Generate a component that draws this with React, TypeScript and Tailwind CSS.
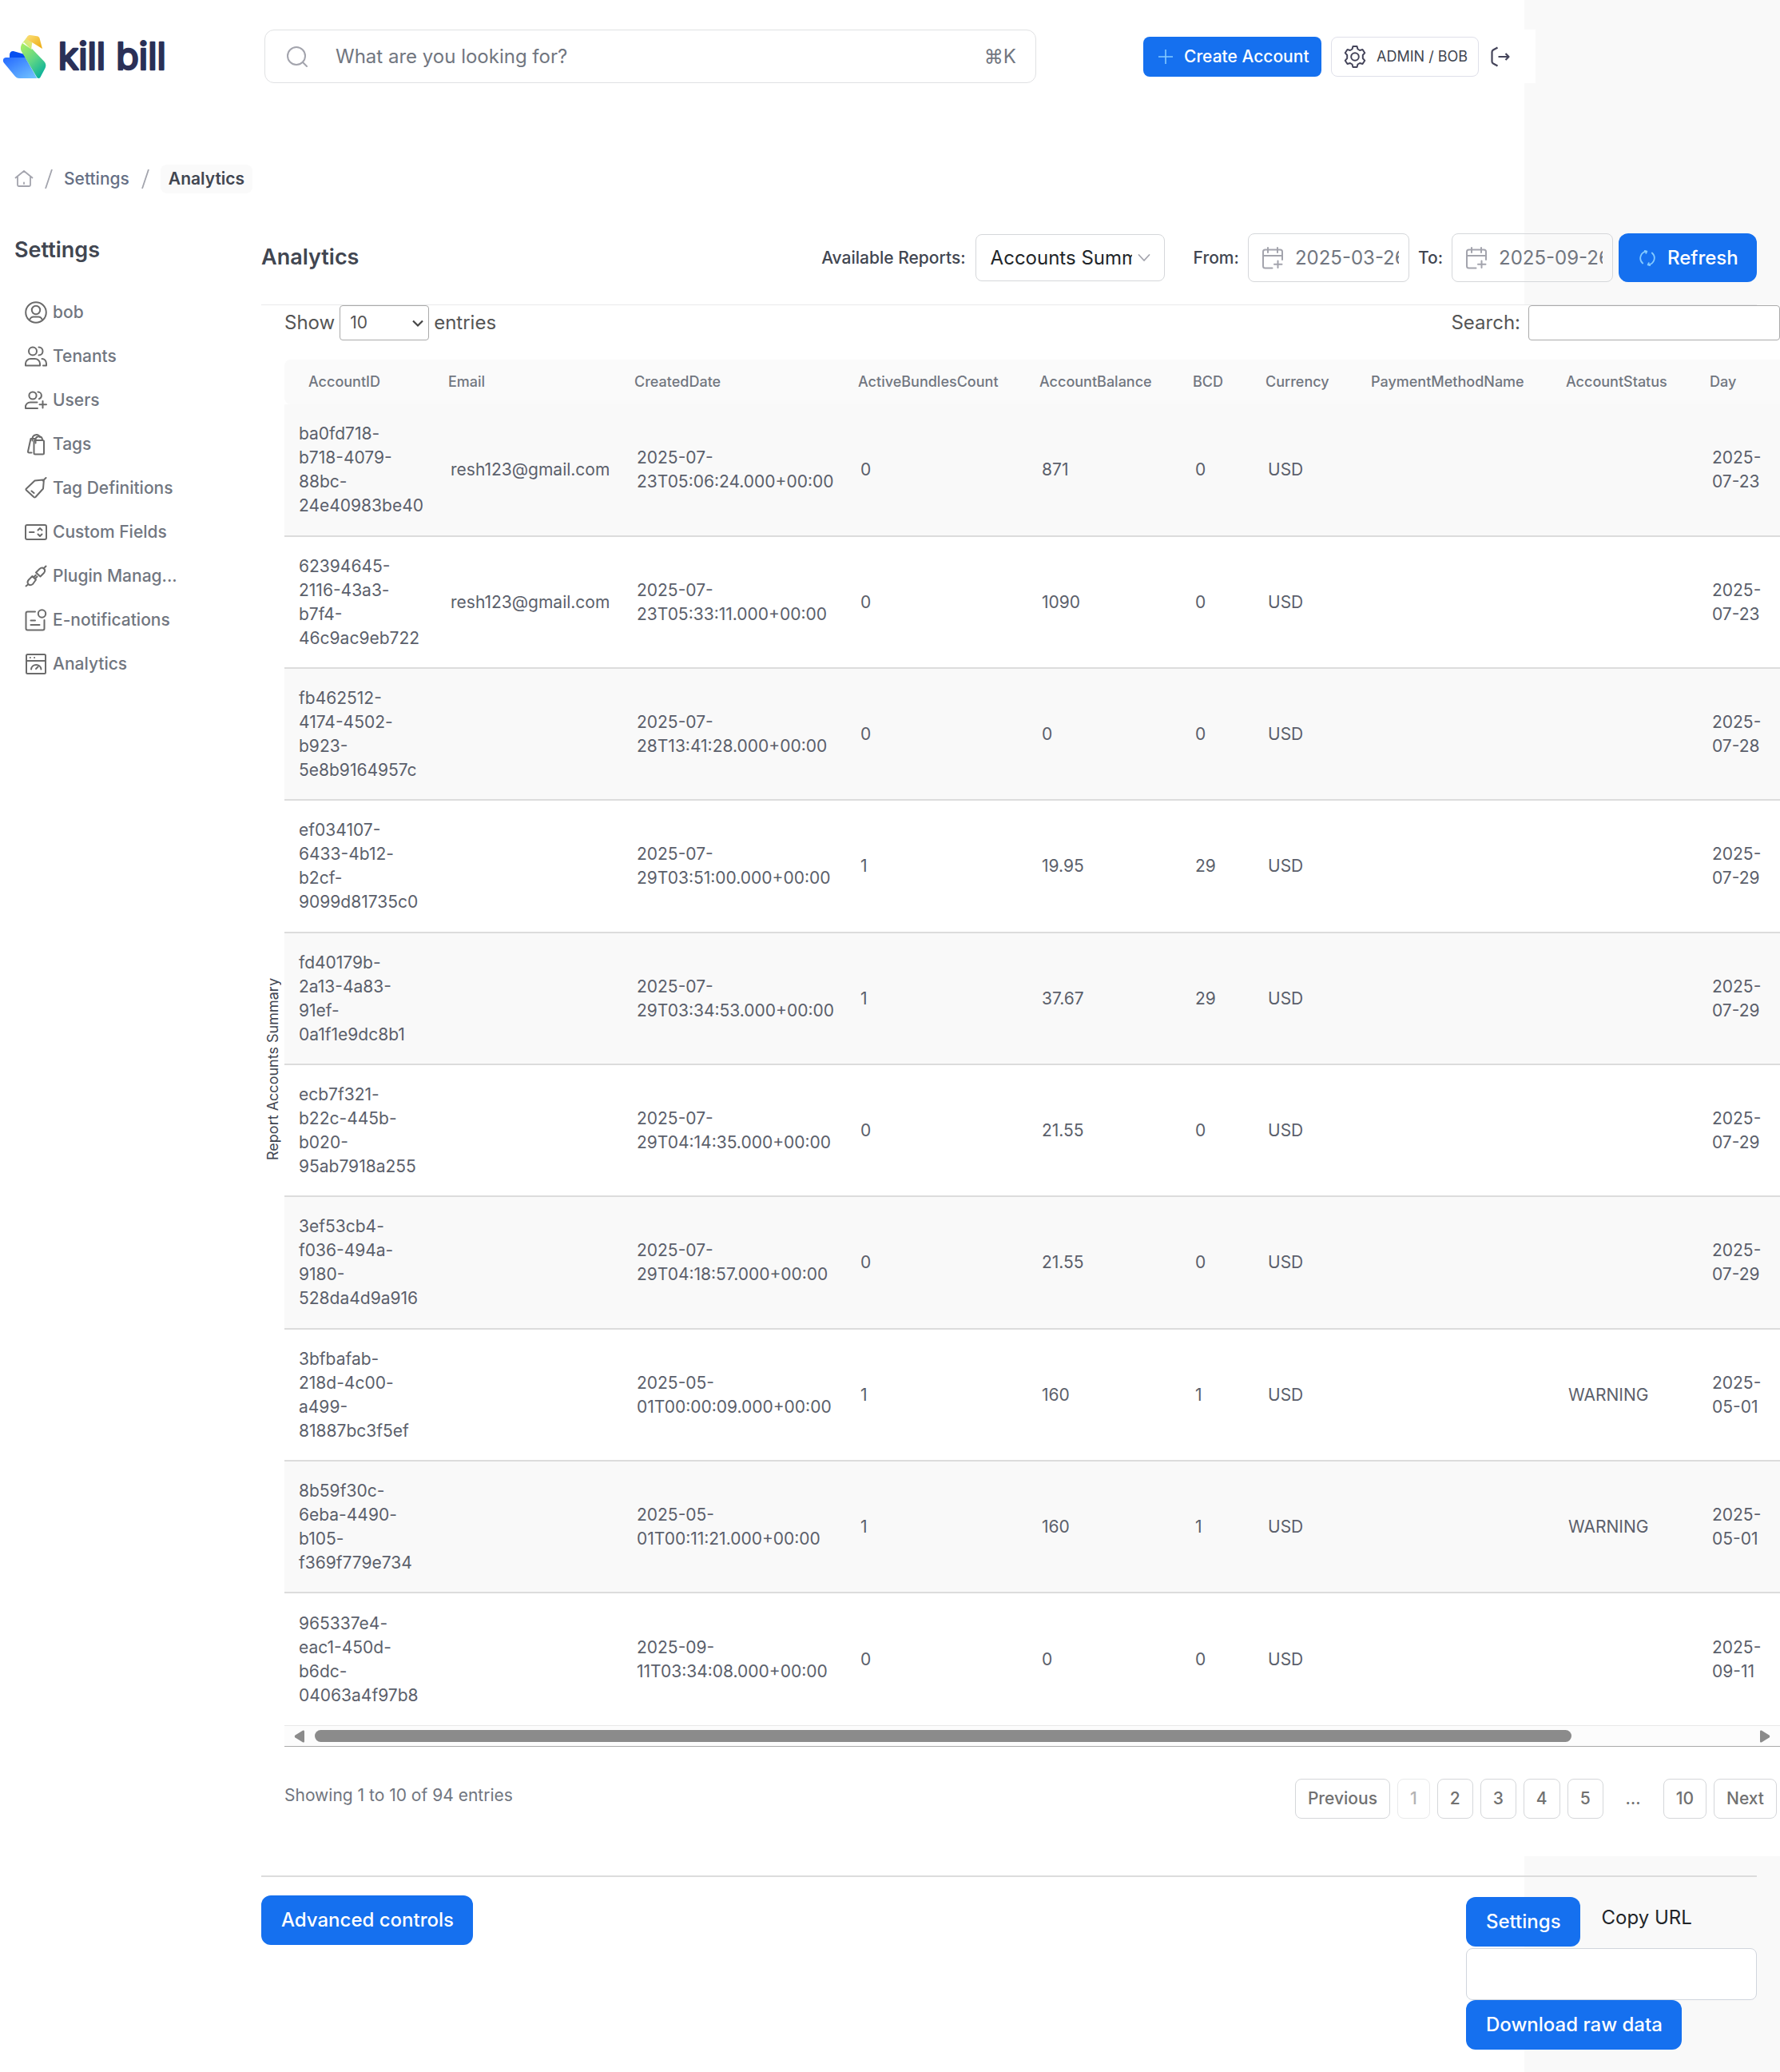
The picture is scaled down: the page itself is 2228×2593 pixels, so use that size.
import React from "react";

type IconProps = { children: React.ReactNode };

function SideIcon({ children }: IconProps) {
  return (
    <svg
      className="h-7 w-7 shrink-0"
      viewBox="0 0 28 28"
      fill="none"
      stroke="#6b6b6b"
      strokeWidth="2"
      strokeLinecap="round"
      strokeLinejoin="round"
      aria-hidden="true"
    >
      {children}
    </svg>
  );
}

const sideItems: { label: string; icon: React.ReactNode }[] = [
  {
    label: "bob",
    icon: (
      <>
        <circle cx="14" cy="14" r="12.8" />
        <circle cx="14" cy="11" r="5.2" />
        <path d="M6 23.5c1-3 3-4 5-4h6c2 0 4 1 5 4" />
      </>
    ),
  },
  {
    label: "Tenants",
    icon: (
      <>
        <circle cx="10" cy="7.5" r="5" />
        <path d="M17.5 2.6c3 0 5 2.2 5 4.9s-2 4.9-5 4.9" />
        <path d="M1 25.5v-2.5c0-3.5 3-6 6.500-6h5c3.500 0 6.500 2.500 6.500 6v2.500z" />
        <path d="M21.5 17c3 0 5.500 2.500 5.500 6v2.500h-4" />
      </>
    ),
  },
  {
    label: "Users",
    icon: (
      <>
        <circle cx="10" cy="8" r="4.6" />
        <path d="M16.5 3.6c2.500 0 4.400 2 4.400 4.400 0 1.800-1.200 3.500-3 4.200" />
        <path d="M15.5 16.5H7c-3.500 0-6 2.500-6 5.500v2h15" />
        <path d="M22.5 15v8.500M18.5 19.2h8.500" />
      </>
    ),
  },
  {
    label: "Tags",
    icon: (
      <>
        <rect x="11.5" y="9" width="12.5" height="17.5" rx="1.5" />
        <path d="M13.5 12.5V8a4.300 4.300 0 0 1 8.500 0" />
        <path d="M9.5 9.5V6.500a5 5 0 0 1 9.500-1.500M13 7H7.500l-3.500 16c0 1 .5 1.500 1.500 1.500h3" />
      </>
    ),
  },
  {
    label: "Tag Definitions",
    icon: (
      <>
        <path d="M12.5 4.5l10-1 1.300 1.300-.8 9.700L13.500 25c-.7.6-1.500.6-2.200 0L2 16.500c-.6-.6-.6-1.400 0-2z" />
        <path d="M22.8 4.5L26.500 1M8.500 17.500l3 2.500" />
      </>
    ),
  },
  {
    label: "Custom Fields",
    icon: (
      <>
        <rect x="1" y="5" width="26" height="18" rx="2" />
        <path d="M6 14h5.500M16.500 11.500l2.500-2.500 2.500 2.500M16.500 16.500l2.500 2.500 2.500-2.500" />
      </>
    ),
  },
  {
    label: "Plugin Manag...",
    icon: (
      <>
        <path d="M23.500 4.500L26.500 1.500" />
        <path d="M14 9.500l4.500-4.500c2-1.800 4-1.800 5.500-.500 1.500 1.500 1.500 3.500 0 5.500l-4.500 4.500z" />
        <path d="M14 18.500L9.500 14l-4.500 4.500c-1.800 2-1.800 4-.500 5.500 1.500 1.500 3.500 1.500 5.500 0zM4 24.500L1.500 26.500" />
        <path d="M11 15.500l2.800-2.800M12.800 17.300l2.800-2.800" />
      </>
    ),
  },
  {
    label: "E-notifications",
    icon: (
      <>
        <path d="M13 3.500H3.500c-1 0-2 .7-2 2v19c0 1 .8 2 2 2h19c1.200 0 2-1 2-2V14" />
        <circle cx="21.5" cy="6" r="4.7" />
        <path d="M7.5 14.500h5.500M7.500 20h11" />
      </>
    ),
  },
  {
    label: "Analytics",
    icon: (
      <>
        <rect x="2" y="2" width="24" height="24" rx="1.5" />
        <path d="M2 10h24M6.800 6h.1M12 6h.1M8 20.500a6.300 6.300 0 0 1 12.500 0M14 20l2.500-2.500" />
      </>
    ),
  },
];

const columns = [
  { label: "AccountID", width: "w-[190px]" },
  { label: "Email", width: "w-[233px]" },
  { label: "CreatedDate", width: "w-[280px]" },
  { label: "ActiveBundlesCount", width: "w-[227px]" },
  { label: "AccountBalance", width: "w-[192px]" },
  { label: "BCD", width: "w-[91px]" },
  { label: "Currency", width: "w-[132px]" },
  { label: "PaymentMethodName", width: "w-[244px]" },
  { label: "AccountStatus", width: "w-[180px]" },
  { label: "Day", width: "" },
];

const rows: string[][] = [
  ["ba0fd718-b718-4079-88bc-24e40983be40", "resh123@gmail.com", "2025-07-23T05:06:24.000+00:00", "0", "871", "0", "USD", "", "", "2025-07-23"],
  ["62394645-2116-43a3-b7f4-46c9ac9eb722", "resh123@gmail.com", "2025-07-23T05:33:11.000+00:00", "0", "1090", "0", "USD", "", "", "2025-07-23"],
  ["fb462512-4174-4502-b923-5e8b9164957c", "", "2025-07-28T13:41:28.000+00:00", "0", "0", "0", "USD", "", "", "2025-07-28"],
  ["ef034107-6433-4b12-b2cf-9099d81735c0", "", "2025-07-29T03:51:00.000+00:00", "1", "19.95", "29", "USD", "", "", "2025-07-29"],
  ["fd40179b-2a13-4a83-91ef-0a1f1e9dc8b1", "", "2025-07-29T03:34:53.000+00:00", "1", "37.67", "29", "USD", "", "", "2025-07-29"],
  ["ecb7f321-b22c-445b-b020-95ab7918a255", "", "2025-07-29T04:14:35.000+00:00", "0", "21.55", "0", "USD", "", "", "2025-07-29"],
  ["3ef53cb4-f036-494a-9180-528da4d9a916", "", "2025-07-29T04:18:57.000+00:00", "0", "21.55", "0", "USD", "", "", "2025-07-29"],
  ["3bfbafab-218d-4c00-a499-81887bc3f5ef", "", "2025-05-01T00:00:09.000+00:00", "1", "160", "1", "USD", "", "WARNING", "2025-05-01"],
  ["8b59f30c-6eba-4490-b105-f369f779e734", "", "2025-05-01T00:11:21.000+00:00", "1", "160", "1", "USD", "", "WARNING", "2025-05-01"],
  ["965337e4-eac1-450d-b6dc-04063a4f97b8", "", "2025-09-11T03:34:08.000+00:00", "0", "0", "0", "USD", "", "", "2025-09-11"],
];

function Logo() {
  return (
    <a href="#" aria-label="kill bill" className="flex w-[331px] shrink-0">
      <svg className="h-[67px] w-[220px]" viewBox="0 21 660 201" aria-hidden="true">
        <defs>
          <linearGradient id="wing" x1="0" y1="0" x2="1" y2="1">
            <stop offset="0" stopColor="#2468ff" />
            <stop offset="1" stopColor="#74c6ff" />
          </linearGradient>
          <linearGradient id="body" x1="0.1" y1="0" x2="0.8" y2="1">
            <stop offset="0" stopColor="#a8ee63" />
            <stop offset="0.5" stopColor="#5fd685" />
            <stop offset="1" stopColor="#06ae9c" />
          </linearGradient>
          <linearGradient id="beak" x1="0" y1="0" x2="1" y2="1">
            <stop offset="0" stopColor="#fbe07a" />
            <stop offset="1" stopColor="#eda90c" />
          </linearGradient>
          <linearGradient id="neck" x1="0" y1="1" x2="0.6" y2="0">
            <stop offset="0" stopColor="#aef06a" />
            <stop offset="1" stopColor="#f3e27a" />
          </linearGradient>
        </defs>
        <path d="M36 128v-12c0-10 8-16 17-13l42 12v16z" fill="#064ff0" />
        <path d="M12 134c1-5 5-8 11-8h72l44 78H72c-7 0-12-3-16-8L15 146c-3-4-4-8-3-12z" fill="url(#wing)" />
        <path d="M84 72l36 24-2-5 48 50c6 7 8 15 4 24l-19 36c-3 4-9 4-12 0L80 102c-4-10-3-20 4-30z" fill="url(#body)" />
        <path d="M82 75l22-29 17 24-4 26-27-27z" fill="url(#neck)" />
        <path d="M104 46c3-4 6-5 11-4l24 4c5 1 9 4 10 9l10 38-40-25-21-12z" fill="url(#beak)" />
        <text
          x="218"
          y="172"
          fontFamily="Inter, sans-serif"
          fontSize="140"
          fontWeight="400"
          fill="#2a3057"
          stroke="#2a3057"
          strokeWidth="8"
          strokeLinejoin="round"
        >
          kill bill
        </text>
      </svg>
    </a>
  );
}

function CalendarIcon() {
  return (
    <svg className="h-7 w-7 shrink-0" viewBox="0 0 28 28" fill="none" stroke="#a3a4ad" strokeWidth="2" strokeLinecap="round" strokeLinejoin="round" aria-hidden="true">
      <path d="M13.500 26.500H4.500c-1.500 0-2.500-1-2.500-2.500V6c0-1.500 1-2.500 2.500-2.500h19c1.500 0 2.500 1 2.500 2.500v10M2 11h24M8 1v6M20 1v6M20.500 17.500v8.500M16 21.800h9.500" />
    </svg>
  );
}

function DateField({ id, label, value }: { id: string; label: string; value: string }) {
  return (
    <>
      <label htmlFor={id} className="text-[21px] font-medium text-[#414651]">{label}</label>
      <div className="ml-[11px] flex h-[61px] w-[202px] items-center rounded-lg border border-[#d5d7da] pl-4 pr-3">
        <CalendarIcon />
        <input id={id} defaultValue={value} className="ml-[14px] min-w-0 flex-1 bg-transparent text-2xl text-[#717680] outline-none" />
      </div>
    </>
  );
}

function Header() {
  return (
    <header className="mt-[37px] -mr-[14px] flex h-[67px] items-center bg-white">
      <Logo />
      <div className="flex h-[67px] flex-1 items-center rounded-xl border border-[#e0e1e3] px-6">
        <svg className="h-8 w-8 shrink-0" viewBox="0 0 32 32" fill="none" stroke="#a3a4ad" strokeWidth="2" strokeLinecap="round" aria-hidden="true">
          <circle cx="15" cy="15" r="11" />
          <path d="M23 23l5 5" />
        </svg>
        <input aria-label="Search" placeholder="What are you looking for?" className="ml-8 min-w-0 flex-1 bg-transparent text-2xl text-[#717680] outline-none placeholder:text-[#717680]" />
        <span className="text-2xl text-[#717680]">⌘K</span>
      </div>
      <button className="ml-[134px] flex h-[50px] w-[223px] items-center rounded-lg bg-[#1570ef] pl-[19px] text-[21px] font-medium whitespace-nowrap text-white">
        <svg className="mr-[14px] h-[18px] w-[18px] shrink-0" viewBox="0 0 18 18" stroke="#84caff" strokeWidth="1.6" aria-hidden="true">
          <path d="M9 0v18M0 9h18" />
        </svg>
        Create Account
      </button>
      <button className="ml-3 flex h-[50px] w-[185px] items-center rounded-lg border border-[#dfe0ea] pl-[15px] text-lg text-[#414651]">
        <svg className="mr-[13px] h-7 w-7 shrink-0" viewBox="0 0 28 28" fill="none" stroke="#44445a" strokeWidth="2" strokeLinejoin="round" aria-hidden="true">
          <circle cx="14" cy="14" r="4.8" />
          <path d="M11.500 1h5l1 3.500 2.500 1.500 3.500-1 2.800 4.200-2.500 2.800v4l2.500 2.800-2.800 4.200-3.500-1-2.500 1.500-1 3.500h-5l-1-3.500L8 22l-3.500 1-2.800-4.200L4.200 16v-4L1.700 9.200 4.500 5 8 6l2.500-1.500z" />
        </svg>
        ADMIN / BOB
      </button>
      <button aria-label="Log out" className="ml-[14px] mr-[31px]">
        <svg className="h-[26px] w-[26px]" viewBox="0 0 26 26" fill="none" stroke="#44445a" strokeWidth="2.2" strokeLinejoin="round" aria-hidden="true">
          <path d="M9.500 1.500L4 4.500c-1 .6-1.500 1.500-1.500 2.500v12c0 1 .5 2 1.500 2.500l5.500 3M10.500 13h13M19.500 9l4 4-4 4" />
        </svg>
      </button>
    </header>
  );
}

function Breadcrumb() {
  return (
    <nav aria-label="Breadcrumb" className="mt-[102px] flex h-9 items-center pl-[18px] text-[21px] leading-7">
      <a href="#" aria-label="Home">
        <svg className="h-6 w-6" viewBox="0 0 24 24" fill="none" stroke="#a3a4ad" strokeWidth="1.8" strokeLinecap="round" strokeLinejoin="round" aria-hidden="true">
          <path d="M1.500 10.500L12 2l10.500 8.500M4 9v10.500c0 1 .6 1.500 1.500 1.500h13c1 0 1.500-.6 1.500-1.500V9M12 16.500v1.500" />
        </svg>
      </a>
      <svg className="ml-[14px] h-6 w-2.5" viewBox="0 0 10 24" stroke="#a3a4ad" strokeWidth="1.8" aria-hidden="true"><path d="M1 24L9 0" /></svg>
      <a href="#" className="ml-[14px] font-medium text-[#667085]">Settings</a>
      <svg className="ml-[15px] h-6 w-2.5" viewBox="0 0 10 24" stroke="#a3a4ad" strokeWidth="1.8" aria-hidden="true"><path d="M1 24L9 0" /></svg>
      <a href="#" aria-current="page" className="ml-[14px] rounded-lg bg-[#fafafa] px-2.5 py-1 font-semibold text-[#414651]">Analytics</a>
    </nav>
  );
}

function Sidebar() {
  return (
    <aside className="w-[327px] shrink-0 pt-[5px]">
      <h2 className="pl-[18px] text-[27px] leading-8 font-semibold text-[#414651]">Settings</h2>
      <ul className="mt-[34px]">
        {sideItems.map((item) => (
          <li key={item.label}>
            <a href="#" className="flex h-[55px] items-center gap-[7px] pl-[31px] text-[21px] font-medium text-[#717680]">
              <SideIcon>{item.icon}</SideIcon>
              {item.label}
            </a>
          </li>
        ))}
      </ul>
    </aside>
  );
}

function Toolbar() {
  return (
    <div className="flex h-[90px] items-start border-b border-[#e9eaeb]">
      <h1 className="flex-1 self-start pt-3 text-[27px] leading-9 font-semibold text-[#414651]">Analytics</h1>
      <div className="flex items-center">
        <label htmlFor="report" className="text-[21px] font-medium text-[#414651]">Available Reports:</label>
        <div className="relative ml-3 mr-9">
          <select id="report" className="h-[59px] w-[237px] appearance-none rounded-lg border border-[#d5d7da] bg-white pl-[18px] pr-10 text-2xl text-[#212529]">
            <option>Accounts Summary</option>
          </select>
          <svg className="absolute top-6 right-[18px] h-3 w-4" viewBox="0 0 16 12" fill="none" stroke="#a3a4ad" strokeWidth="1.8" strokeLinecap="round" strokeLinejoin="round" aria-hidden="true"><path d="M1.500 2L8 9l6.500-7" /></svg>
        </div>
        <DateField id="from" label="From:" value="2025-03-26" />
        <div className="w-[11px]" />
        <DateField id="to" label="To:" value="2025-09-26" />
        <button className="ml-[7px] flex h-[61px] w-[173px] items-center rounded-xl bg-[#1570ef] pl-[26px] text-2xl font-medium text-white">
          <svg className="mr-[15px] h-5 w-5" viewBox="0 0 20 20" fill="none" stroke="#84caff" strokeWidth="1.8" strokeLinecap="round" strokeLinejoin="round" aria-hidden="true">
            <path d="M4.200 16.500A8.500 8.500 0 0 1 9 1.600M6.800 .9l2.500.8-1 2.200M15.800 3.500a8.500 8.500 0 0 1-4.800 14.900M13.200 19.100l-2.500-.8 1-2.200" />
          </svg>
          Refresh
        </button>
      </div>
    </div>
  );
}

function ReportTable() {
  return (
    <table className="w-full table-fixed border-separate border-spacing-0 text-left">
      <thead>
        <tr>
          {columns.map((c) => (
            <th key={c.label} scope="col" className={`${c.width} h-14 bg-[#fafafa] pl-[15px] text-lg font-medium text-[#717680] first:rounded-l-lg first:pl-[30px]`}>
              {c.label}
            </th>
          ))}
        </tr>
      </thead>
      <tbody>
        {rows.map((r) => (
          <tr key={r[0]} className="group h-[165px] odd:bg-[#f9f9f9] nth-[3n+1]:h-[166px]">
            {r.map((v, i) => (
              <td key={i} className="border-b-2 border-[#dcdcdc] pl-[18px] text-[21px] leading-[30px] text-[#5b5f6b] group-last:border-b group-last:border-[#e8e8e8] first:pr-[22px]">
                {v}
              </td>
            ))}
          </tr>
        ))}
      </tbody>
    </table>
  );
}

function ScrollTrack() {
  return (
    <div className="flex h-[26px] items-center border-b border-[#aaaaaa] bg-[#fcfcfc] px-3">
      <svg className="h-4 w-3.5" viewBox="0 0 14 16" fill="#8b8b8b" aria-hidden="true"><path d="M13 2v12c0 1.500-1 2-2.200 1.300L1.500 9.500c-1-.8-1-2.200 0-3L10.800.7C12 0 13 .5 13 2z" /></svg>
      <div className="ml-3 flex-1">
        <div className="h-[15px] w-[87%] rounded-full bg-[#8b8b8b]" />
      </div>
      <svg className="h-4 w-3.5" viewBox="0 0 14 16" fill="#8b8b8b" aria-hidden="true"><path d="M1 2v12c0 1.500 1 2 2.200 1.300l9.300-5.800c1-.8 1-2.200 0-3L3.200.7C2 0 1 .5 1 2z" /></svg>
    </div>
  );
}

const pageButton = "h-[50px] rounded-lg border border-[#d5d7da] px-[15px] text-[21px] font-medium text-[#717171]";

function Pagination() {
  return (
    <nav aria-label="Pages" className="flex items-center gap-[9px] pr-1">
      <button className={pageButton}>Previous</button>
      <button className="h-[50px] rounded-lg border border-[#e9eaeb] px-[15px] text-[21px] font-medium text-[#b3b3b3]">1</button>
      {["2", "3", "4", "5"].map((n) => (
        <button key={n} className={pageButton}>{n}</button>
      ))}
      <span className="px-[19px] text-[21px] font-medium text-[#717171]">…</span>
      <button className={pageButton}>10</button>
      <button className={pageButton}>Next</button>
    </nav>
  );
}

function Report() {
  return (
    <section className="-mr-[29px] flex items-center bg-white pb-[30px]">
      <div className="flex w-[29px] shrink-0 justify-center">
        <span className="rotate-180 text-lg leading-6 text-[#414651] [writing-mode:vertical-rl]">Report Accounts Summary</span>
      </div>
      <div className="min-w-0 flex-1">
        <div className="flex items-center justify-between text-2xl text-[#555555]">
          <div className="flex items-center gap-1.5">
            <label htmlFor="length">Show</label>
            <div className="relative">
              <select id="length" className="h-11 w-28 appearance-none rounded border border-[#aaaaaa] bg-white pl-3 text-[21px] text-[#555555]">
                <option>10</option>
              </select>
              <svg className="absolute top-[18px] right-[7px] h-2.5 w-3.5" viewBox="0 0 14 10" fill="none" stroke="#444" strokeWidth="2.2" aria-hidden="true"><path d="M1 1.500l6 6 6-6" /></svg>
            </div>
            <span>entries</span>
          </div>
          <div className="flex items-center gap-2.5">
            <label htmlFor="search">Search:</label>
            <input id="search" className="h-11 w-[315px] rounded border border-[#aaaaaa] bg-white px-2" />
          </div>
        </div>
        <div className="mt-6">
          <ReportTable />
          <ScrollTrack />
        </div>
        <div className="mt-10 flex items-start justify-between">
          <p className="pt-1.5 text-[21px] leading-[30px] text-[#717680]">Showing 1 to 10 of 94 entries</p>
          <Pagination />
        </div>
        <div className="h-[17px]" />
      </div>
    </section>
  );
}

function Actions() {
  const primary = "h-[62px] rounded-xl bg-[#1570ef] pl-[25px] pr-6 text-2xl font-medium text-white";
  return (
    <div className="mt-6 border-t-2 border-[#dcdcdc] pt-[23px]">
      <div className="flex items-start justify-between">
        <button className={primary}>Advanced controls</button>
        <div className="w-[364px] pt-0.5">
          <div className="flex items-start">
            <button className={primary}>Settings</button>
            <a href="#" className="ml-[27px] pt-2.5 text-2xl text-[#212529]">Copy URL</a>
          </div>
          <input aria-label="URL" className="mt-0.5 block h-[65px] w-full rounded-lg border border-[#d0d5dd] bg-white px-3 text-2xl" />
          <button className={primary}>Download raw data</button>
        </div>
      </div>
    </div>
  );
}

export default function App() {
  return (
    <div className="min-h-screen overflow-hidden bg-[#f9f9f9] font-['Inter',sans-serif]">
      <div className="mr-80 flex min-h-screen flex-col bg-white">
        <Header />
        <Breadcrumb />
        <div className="mt-[50px] -mr-[291px] flex flex-1">
          <Sidebar />
          <main className="min-w-0 flex-1">
            <Toolbar />
            <Report />
            <Actions />
          </main>
        </div>
      </div>
    </div>
  );
}
